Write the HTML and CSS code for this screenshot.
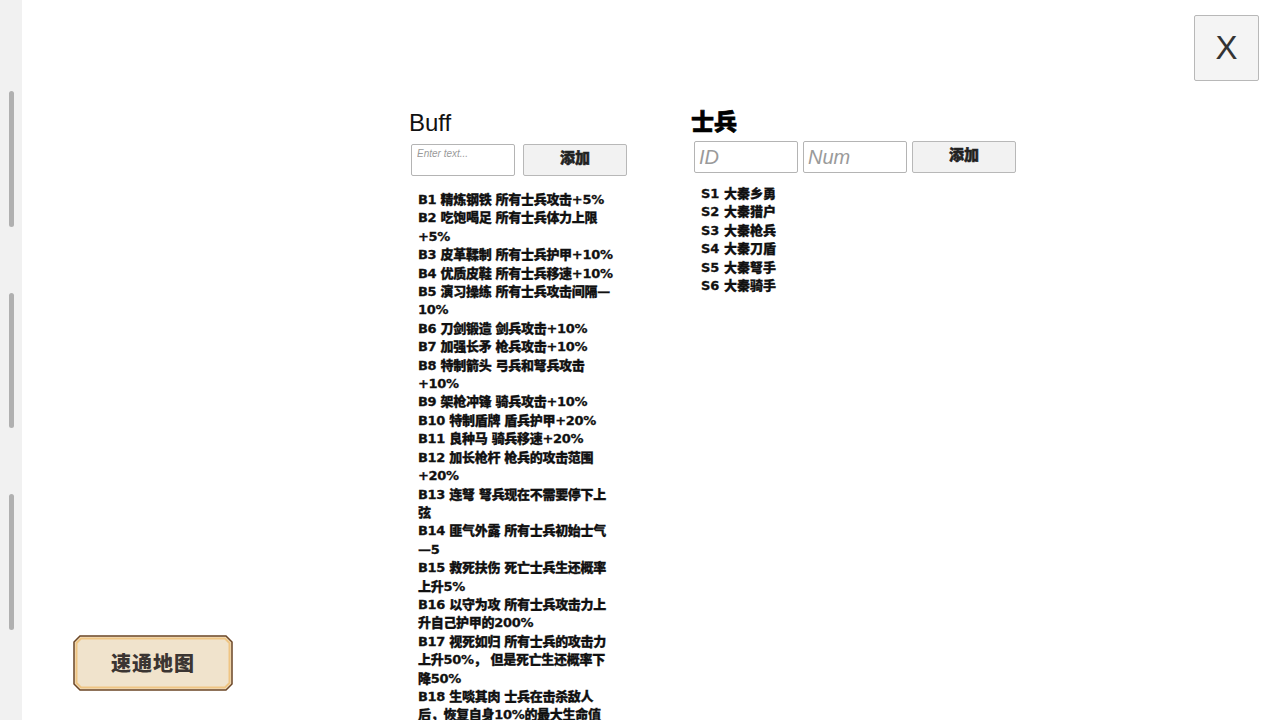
FILE: index.html
```html
<!DOCTYPE html>
<html lang="en">
<head>
    <meta charset="UTF-8">
    <title>Buff</title>
    <link rel="stylesheet" href="styles.css">
</head>
<body>
    <div class="sidebar">
        <div class="thumb"></div>
        <div class="thumb"></div>
        <div class="thumb"></div>
    </div>
    <div class="main">
        <div class="panel buff-panel">
            <h2 class="title title-latin">Buff</h2>
            <div class="add-row buff-row">
                <input class="field field-small" type="text" placeholder="Enter text...">
                <button class="btn" type="button">添加</button>
            </div>
            <div class="list buff-list">
                <div>B1 精炼钢铁 所有士兵攻击+5%</div>
                <div>B2 吃饱喝足 所有士兵体力上限+5%</div>
                <div>B3 皮革鞣制 所有士兵护甲+10%</div>
                <div>B4 优质皮鞋 所有士兵移速+10%</div>
                <div>B5 演习操练 所有士兵攻击间隔—10%</div>
                <div>B6 刀剑锻造 剑兵攻击+10%</div>
                <div>B7 加强长矛 枪兵攻击+10%</div>
                <div>B8 特制箭头 弓兵和弩兵攻击+10%</div>
                <div>B9 架枪冲锋 骑兵攻击+10%</div>
                <div>B10 特制盾牌 盾兵护甲+20%</div>
                <div>B11 良种马 骑兵移速+20%</div>
                <div>B12 加长枪杆 枪兵的攻击范围+20%</div>
                <div>B13 连弩 弩兵现在不需要停下上弦</div>
                <div>B14 匪气外露 所有士兵初始士气—5</div>
                <div>B15 救死扶伤 死亡士兵生还概率上升5%</div>
                <div>B16 以守为攻 所有士兵攻击力上升自己护甲的200%</div>
                <div>B17 视死如归 所有士兵的攻击力上升50%， 但是死亡生还概率下降50%</div>
                <div>B18 生啖其肉 士兵在击杀敌人后，恢复自身10%的最大生命值</div>
            </div>
        </div>
        <div class="panel soldier-panel">
            <h2 class="title">士兵</h2>
            <div class="add-row soldier-row">
                <input class="field" type="text" placeholder="ID">
                <input class="field" type="text" placeholder="Num">
                <button class="btn" type="button">添加</button>
            </div>
            <div class="list soldier-list">
                <div>S1 大秦乡勇</div>
                <div>S2 大秦猎户</div>
                <div>S3 大秦枪兵</div>
                <div>S4 大秦刀盾</div>
                <div>S5 大秦弩手</div>
                <div>S6 大秦骑手</div>
            </div>
        </div>
    </div>
    <button class="close-btn" type="button">X</button>
    <button class="map-btn" type="button">
        <svg class="map-frame" viewBox="0 0 160 56" width="160" height="56">
            <path d="M7 1H153L159 7V49L153 55H7L1 49V7Z" fill="#f0e3cc" stroke="#6b4524" stroke-width="1.5"/>
            <path d="M8 3.5H152L156.5 8V48L152 52.500H8L3.500 48V8Z" fill="none" stroke="#efc583" stroke-width="2"/>
        </svg>
        <span class="map-label">速通地图</span>
    </button>
</body>
</html>
```

FILE: styles.css
```css
body {
    margin: 0;
    height: 720px;
    overflow: hidden;
    display: flex;
    background: #fff;
    font-family: "Liberation Sans", Arial, sans-serif;
}
.sidebar {
    box-sizing: border-box;
    display: flex;
    flex-direction: column;
    gap: 66px;
    width: 22px;
    flex-shrink: 0;
    height: 720px;
    padding: 91px 0 0 9px;
    background: #f1f1f1;
}
.thumb {
    width: 5px;
    height: 135.500px;
    background: #b0b0b0;
    border-radius: 3px;
}
.main {
    display: flex;
    flex: 1;
    padding: 105px 0 0 387px;
}
.panel {
    display: flex;
    flex-direction: column;
}
.buff-panel {
    width: 283px;
}
.title {
    margin: 0 0 0 -1px;
    height: 32px;
    line-height: 30px;
    font-family: "Noto Sans CJK SC", sans-serif;
    font-size: 23px;
    font-weight: 900;
    color: #000;
    -webkit-text-stroke: 0.6px #000;
}
.title-latin {
    margin: 2px 0 0;
    font-family: "Liberation Sans", Arial, sans-serif;
    font-size: 24px;
    line-height: 32px;
    font-weight: 400;
    color: #111;
    -webkit-text-stroke: 0;
}
.add-row {
    display: flex;
    margin-left: 2px;
}
.buff-row {
    gap: 8px;
    margin-top: 5px;
}
.soldier-row {
    gap: 5px;
    margin-top: 4px;
}
.field {
    box-sizing: border-box;
    width: 104px;
    height: 32px;
    padding: 0 4px;
    border: 1px solid #b4b4b4;
    border-radius: 2px;
    background: #fff;
    font-family: "Liberation Sans", Arial, sans-serif;
    font-size: 20px;
}
.field::placeholder {
    color: #9a9a9a;
    font-style: italic;
}
.field-small {
    font-size: 10px;
    padding: 0 5px 13px;
}
.btn {
    box-sizing: border-box;
    width: 104px;
    height: 32px;
    padding: 0 0 7px;
    border: 1px solid #b8b8b8;
    border-radius: 2px;
    background: #f2f2f2;
    color: #222;
    font-family: "Noto Sans CJK SC", sans-serif;
    font-size: 15px;
    font-weight: 900;
    -webkit-text-stroke: 0.5px #222;
}
.list {
    margin-left: 9px;
    font-family: "DejaVu Sans", "Noto Sans CJK SC", sans-serif;
    font-size: 13px;
    font-weight: 900;
    line-height: 18.4px;
    color: #111;
    -webkit-text-stroke: 0.3px #111;
}
.buff-list {
    width: 198px;
    margin-top: 15px;
    letter-spacing: -0.3px;
}
.soldier-list {
    margin-top: 12px;
}
.close-btn {
    position: absolute;
    left: 1194px;
    top: 15px;
    box-sizing: border-box;
    width: 65px;
    height: 66px;
    border: 1px solid #b8b8b8;
    border-radius: 2px;
    background: #f4f4f4;
    color: #333;
    font-family: "Liberation Sans", Arial, sans-serif;
    font-size: 33px;
}
.map-btn {
    position: absolute;
    left: 73px;
    top: 635px;
    width: 160px;
    height: 56px;
    padding: 0 0 2px;
    border: none;
    background: none;
}
.map-frame {
    position: absolute;
    left: 0;
    top: 0;
}
.map-label {
    position: relative;
    font-family: "Noto Sans CJK SC", sans-serif;
    font-size: 20px;
    font-weight: 900;
    letter-spacing: 1px;
    color: #3b3532;
}
```
